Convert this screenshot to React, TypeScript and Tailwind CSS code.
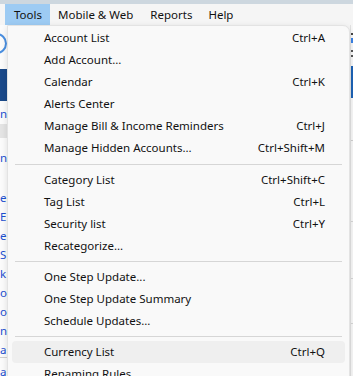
import React from 'react';

type Item = { label: string; shortcut?: string; active?: boolean };

const groups: { items: Item[]; gap: string }[] = [
  {
    gap: 'h-[10px]',
    items: [
      { label: 'Account List', shortcut: 'Ctrl+A' },
      { label: 'Add Account...' },
      { label: 'Calendar', shortcut: 'Ctrl+K' },
      { label: 'Alerts Center' },
      { label: 'Manage Bill & Income Reminders', shortcut: 'Ctrl+J' },
      { label: 'Manage Hidden Accounts...', shortcut: 'Ctrl+Shift+M' },
    ],
  },
  {
    gap: 'h-[9px]',
    items: [
      { label: 'Category List', shortcut: 'Ctrl+Shift+C' },
      { label: 'Tag List', shortcut: 'Ctrl+L' },
      { label: 'Security list', shortcut: 'Ctrl+Y' },
      { label: 'Recategorize...' },
    ],
  },
  {
    gap: 'h-[9px]',
    items: [
      { label: 'One Step Update...' },
      { label: 'One Step Update Summary' },
      { label: 'Schedule Updates...' },
    ],
  },
  {
    gap: '',
    items: [
      { label: 'Currency List', shortcut: 'Ctrl+Q', active: true },
      { label: 'Renaming Rules' },
    ],
  },
];

const MenuRow: React.FC<{ item: Item }> = ({ item }) => (
  <div
    className={`flex h-[22px] items-center justify-between rounded-[4px] pl-[32px] pr-[20px] ${
      item.active ? 'bg-[#efefef]' : ''
    }`}
  >
    <span>{item.label}</span>
    {item.shortcut && <span>{item.shortcut}</span>}
  </div>
);

// bits of the app window that peek out behind the menu
const LeftEdge: React.FC = () => (
  <div className="flex w-[7px] flex-col overflow-hidden bg-[#fbfbfb] text-[11.5px] leading-none text-[#1d4fd0]">
    <div className="ml-[-14px] mt-[8px] h-[21px] w-[21px] shrink-0 rounded-full border-2 border-[#4a8fe0]" />
    <div className="mt-[15px] h-[32px] shrink-0 bg-[#1b4a8a]" />
    <div className="mt-[7px] h-[10px] shrink-0">n</div>
    <div className="mt-[6px] h-[14px] shrink-0 bg-[#e4e4e4]" />
    <div className="mt-[14px] h-[10px] shrink-0">n</div>
    <div className="mt-[30px] flex shrink-0 flex-col gap-[9px]">
      <span className="h-[10px]">e</span>
      <span className="h-[10px]">E</span>
      <span className="h-[10px]">e</span>
      <span className="h-[10px]">S</span>
      <span className="h-[10px]">k</span>
      <span className="h-[10px]">o</span>
      <span className="h-[10px]">o</span>
      <span className="h-[10px]">n</span>
      <span className="h-[10px]">a</span>
    </div>
    <div className="mt-[3px] h-px shrink-0 bg-[#d0d0d0]" />
    <div className="mt-[8px] h-[10px] shrink-0">a</div>
  </div>
);

const RightEdge: React.FC = () => (
  <div className="flex w-[3px] flex-col border-l border-[#e2e2e2] bg-[#f7f7f7]">
    <div className="mt-[8px] h-[2px] shrink-0 bg-[#444]" />
    <div className="mt-[3px] h-[5px] shrink-0 bg-[#3b82e6]" />
    <div className="mt-[7px] h-[2px] shrink-0 bg-[#555]" />
    <div className="mt-[3px] h-[2px] shrink-0 bg-[#555]" />
    <div className="mt-[9px] h-[32px] shrink-0 bg-[#1d62b5]" />
    <div className="mt-[42px] h-px shrink-0 bg-[#cfcfcf]" />
    <div className="mt-[80px] h-px shrink-0 bg-[#d6d6d6]" />
    <div className="mt-[56px] h-px shrink-0 bg-[#d6d6d6]" />
    <div className="mt-[44px] h-px shrink-0 bg-[#d6d6d6]" />
  </div>
);

export default function App() {
  return (
    <div
      className="relative h-[376px] w-[353px] overflow-hidden bg-[#f5f5f5] text-[#111]"
      style={{ fontFamily: '"Noto Sans", "Liberation Sans", sans-serif' }}
    >
      <div className="h-[4px] bg-[#cdd7df]" />
      <div className="flex h-[21px] items-stretch bg-[#f5f5f5] pl-[5px] text-[11.5px]">
        <div className="flex w-[45px] items-center bg-[#9dcbf3] pl-[9px]">Tools</div>
        <div className="flex items-center pl-[8px]">Mobile &amp; Web</div>
        <div className="flex items-center pl-[17px]">Reports</div>
        <div className="flex items-center pl-[16px]">Help</div>
      </div>
      <div className="flex h-[351px] justify-between">
        <LeftEdge />
        <RightEdge />
      </div>

      <div className="absolute left-[7px] top-[25px] w-[343px] rounded-tr-[7px] border border-[#e3e3e3] bg-[#f9f9f9] px-[4px] pt-[1px] pb-[6px] text-[11.5px] shadow-[0_2px_6px_rgba(0,0,0,0.12)]">
        {groups.map((g, gi) => (
          <div key={gi}>
            {g.items.map((it) => (
              <MenuRow key={it.label} item={it} />
            ))}
            {g.gap && (
              <div className={`flex items-center px-[3px] ${g.gap}`}>
                <div className="h-px w-full bg-[#d6d6d6]" />
              </div>
            )}
          </div>
        ))}
      </div>
    </div>
  );
}
